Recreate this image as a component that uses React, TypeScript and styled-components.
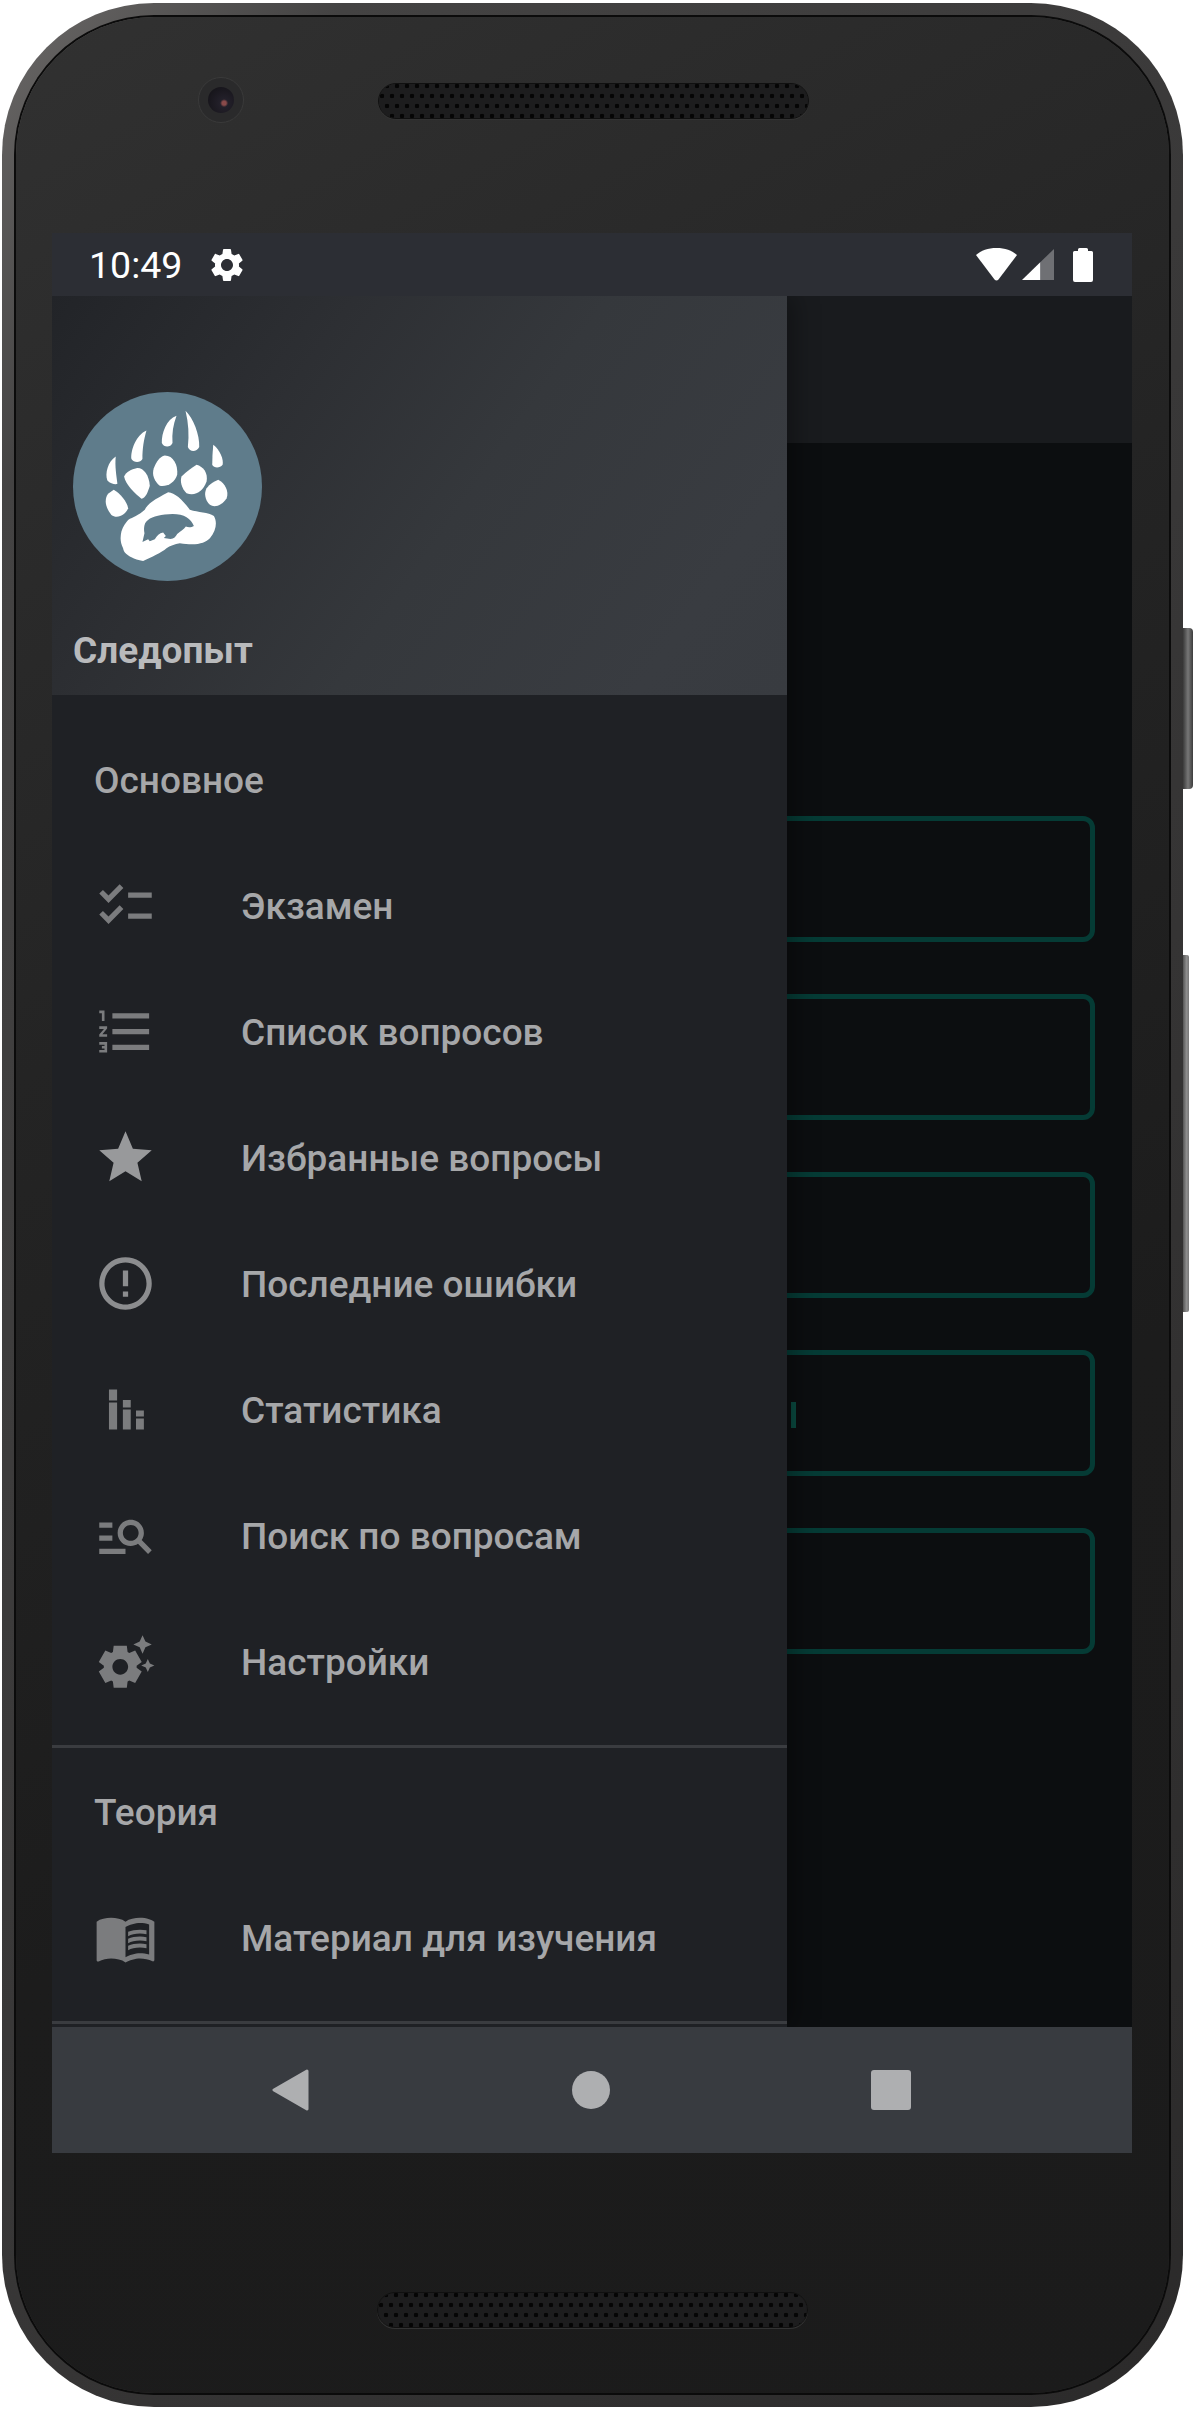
import styled, { createGlobalStyle } from "styled-components";
import type { ReactNode } from "react";
import {
  MdChecklist,
  MdErrorOutline,
  MdFormatListNumbered,
  MdManageSearch,
  MdMenuBook,
  MdSettings,
  MdSettingsSuggest,
  MdStar,
} from "react-icons/md";

const GlobalStyle = createGlobalStyle`
  html, body {
    margin: 0;
    padding: 0;
    background: #ffffff;
  }
  * {
    box-sizing: border-box;
  }
`;

const Page = styled.div`
  width: 1194px;
  height: 2409px;
  padding: 3px 0 0 2px;
  display: flex;
  overflow: hidden;
  font-family: Roboto, "Liberation Sans", sans-serif;
`;
const Frame = styled.div`
  width: 1181px;
  height: 2404px;
  padding: 14px;
  border-radius: 152px;
  background: linear-gradient(125deg, #6a6867 0%, #444343 12%, #363535 60%, #2b2a2a 100%);
  flex-shrink: 0;
`;
const Bezel = styled.div`
  height: 2376px;
  padding: 0 37px 0 36px;
  border-radius: 138px;
  background: linear-gradient(150deg, #313131 0%, #242424 35%, #1c1c1c 65%, #1b1b1b 100%);
  box-shadow: 0 0 0 2px #0b0b0b;
`;
const SideKeys = styled.div`
  display: flex;
  flex-direction: column;
  align-items: flex-start;
`;
const PowerKey = styled.div`
  width: 10px;
  height: 161px;
  margin-top: 625px;
  border-radius: 0 4px 4px 0;
  background: linear-gradient(90deg, #3a3a3a 0%, #777777 50%, #3c3c3c 100%);
`;
const VolumeKey = styled.div`
  width: 6px;
  height: 357px;
  margin-top: 166px;
  border-radius: 0 2px 2px 0;
  background: linear-gradient(90deg, #555555 0%, #8f8f8f 60%, #777777 100%);
`;

const TopBezel = styled.div`
  height: 216px;
  padding-top: 60px;
  display: flex;
  align-items: flex-start;
`;
const Camera = styled.div`
  width: 46px;
  height: 46px;
  margin-left: 146px;
  border-radius: 50%;
  border: 1px solid #3a3a3a;
  background: #2a2a2b;
  display: flex;
  align-items: center;
  justify-content: center;
`;
const Lens = styled.div`
  width: 26px;
  height: 26px;
  border-radius: 50%;
  background: radial-gradient(circle at 62% 62%, #8a4a4a 0 2px, #23202a 4px, #111014 100%);
`;
const Speaker = styled.div<{ $left: number; $top: number }>`
  width: 431px;
  height: 36px;
  margin-left: ${(props) => props.$left}px;
  margin-top: ${(props) => props.$top}px;
  border-radius: 18px;
  border: 1px solid #101010;
  background-color: #1d1d1e;
  background-image:
    radial-gradient(circle, #050505 2px, transparent 2.6px),
    radial-gradient(circle, #050505 2px, transparent 2.6px);
  background-size: 10px 20px;
  background-position: 8px 2px, 13px 12px;
  background-clip: padding-box;
  box-shadow: 0 1px 0 #333333;
`;
const BottomBezel = styled.div`
  height: 240px;
  padding-top: 139px;
  display: flex;
`;

const Screen = styled.div`
  width: 1080px;
  height: 1920px;
  display: flex;
  flex-direction: column;
  background: #0c0e10;
`;
const StatusBar = styled.div`
  height: 63px;
  padding: 0 39px 0 37px;
  display: flex;
  align-items: center;
  background: #2c2e34;
  color: #ffffff;
  flex-shrink: 0;
`;
const Clock = styled.span`
  font-size: 37.5px;
  margin-right: 25px;
`;
const StatusTools = styled.div`
  margin-left: auto;
  display: flex;
  align-items: center;
  gap: 5px;
`;
const Battery = styled.svg`
  margin-left: 14px;
`;
const Stage = styled.div`
  position: relative;
  flex: 1;
  overflow: hidden;
`;
const AppBar = styled.div`
  height: 147px;
  background: #191b1e;
`;
const Content = styled.div`
  padding: 373px 37px 0 42px;
  display: flex;
  flex-direction: column;
  gap: 52px;
`;
const AnswerBox = styled.div`
  height: 126px;
  padding-left: 692px;
  display: flex;
  align-items: center;
  border: 5px solid #053b35;
  border-radius: 12px;
`;
const LabelSliver = styled.div`
  width: 5px;
  height: 26px;
  margin-top: 4px;
  background: #0a4a40;
`;

const Drawer = styled.div`
  position: absolute;
  top: 0;
  left: 0;
  bottom: 0;
  width: 735px;
  background: #1f2125;
  box-shadow: 6px 0 24px rgba(0, 0, 0, 0.35);
`;
const DrawerHeader = styled.div`
  height: 399px;
  padding: 96px 21px 0;
  background: linear-gradient(125deg, #222428 0%, #2d2f33 30%, #35383c 55%, #393c41 85%, #383b40 100%);
`;
const Avatar = styled.svg`
  display: block;
`;
const Title = styled.div`
  margin-top: 48px;
  font-size: 37px;
  line-height: 43px;
  font-weight: 700;
  color: #b9babc;
`;
const MenuGroup = styled.div<{ $first?: boolean }>`
  padding: ${(props) => (props.$first ? "21px 0" : "0 0 21px")};
  border-bottom: 3px solid #3a3c40;
`;
const Subheader = styled.div`
  height: 126px;
  padding: 2px 0 0 42px;
  display: flex;
  align-items: center;
  font-size: 37px;
  font-weight: 500;
  color: #a6a7a9;
`;
const Row = styled.div`
  height: 126px;
  padding-left: 42px;
  display: flex;
  align-items: center;
  gap: 84px;
  font-size: 37px;
  font-weight: 500;
  color: #a6a7a9;
`;
const RowLabel = styled.span`
  padding-top: 2px;
`;
const IconBox = styled.div<{ $tone?: string }>`
  width: 63px;
  height: 63px;
  color: ${(props) => props.$tone ?? "#7b7c7e"};
  display: flex;
  flex-shrink: 0;
  svg {
    width: 63px;
    height: 63px;
    display: block;
  }
`;

const NavBar = styled.div`
  height: 126px;
  padding-right: 3px;
  display: flex;
  align-items: center;
  justify-content: center;
  background: #383b40;
  flex-shrink: 0;
`;
const NavSlot = styled.div`
  width: 300px;
  display: flex;
  justify-content: center;
`;
const HomeKey = styled.div`
  width: 38px;
  height: 38px;
  border-radius: 50%;
  background: #aeafb1;
`;
const RecentKey = styled.div`
  width: 40px;
  height: 40px;
  border-radius: 3px;
  background: #aeafb1;
`;

const StatsIcon = () => (
  <svg viewBox="0 0 24 24" fill="currentColor">
    <path d="M5.7 4.4h3.1v4.2H5.7zM5.7 9.3h3.1v10.3H5.7zM11 8.4h3v2.8h-3zM11 12h3v7.6h-3zM16 12.4h3v2.3h-3zM16 15.4h3v4.2h-3z" />
  </svg>
);

const PawLogo = () => (
  <Avatar width="189" height="189" viewBox="100 97 566 566">
    <circle cx="383" cy="380" r="283" fill="#5f7c8b" />
    <g fill="#ffffff">
      <path d="M228 290C205 305 195 340 203 362C212 372 228 375 233 372C230 345 225 320 228 290Z" />
      <path d="M320 212C290 225 272 270 275 298C282 310 302 310 308 298C308 265 312 240 320 212Z" />
      <path d="M410 168C380 178 365 220 366 250C372 264 392 264 398 250C396 220 400 195 410 168Z" />
      <path d="M437 153C460 175 480 225 478 262C470 278 450 278 444 262C448 225 446 190 437 153Z" />
      <path d="M520 255C540 270 552 300 548 315C540 326 522 326 517 315C517 295 518 275 520 255Z" />
      <path d="M290 325C310 322 328 345 330 378C325 395 318 415 305 417C285 400 258 375 253 350C260 335 275 328 290 325Z" />
      <path d="M375 287C400 287 415 315 412 345C405 370 380 382 360 378C345 365 335 345 342 325C350 305 360 290 375 287Z" />
      <path d="M470 315C490 320 505 340 500 365C490 395 465 410 440 400C425 385 420 365 425 350C440 335 455 325 470 315Z" />
      <path d="M535 360C555 370 568 395 560 415C548 435 525 445 510 435C495 420 492 400 500 385C510 372 522 365 535 360Z" />
      <path d="M222 390C240 400 262 425 265 445C258 465 232 478 215 465C198 445 192 420 205 402Z" />
      <path d="M315 450C322 432 345 418 385 397C405 400 425 415 450 450C475 458 505 458 522 468C532 485 530 510 510 535C495 550 470 558 420 550C405 552 390 558 380 565C365 578 335 592 310 603C295 600 285 598 275 592C262 585 252 578 250 565C240 545 242 530 245 515C250 498 258 488 265 480C280 472 295 468 315 450Z" />
    </g>
    <path
      fill="#5f7c8b"
      d="M316 490C325 475 345 468 375 464C400 460 425 462 440 472C450 478 458 488 462 498C455 503 445 503 438 500C432 508 422 514 412 522C408 530 402 536 392 537L372 534L378 528L370 518C358 520 352 528 345 538L330 544L325 538L308 546L314 520C312 510 312 500 316 490Z"
    />
  </Avatar>
);

type MenuItem = { icon: ReactNode; label: string; tone?: string };

const mainItems: MenuItem[] = [
  { icon: <MdChecklist />, label: "Экзамен" },
  { icon: <MdFormatListNumbered />, label: "Список вопросов" },
  { icon: <MdStar />, label: "Избранные вопросы", tone: "#98999b" },
  { icon: <MdErrorOutline />, label: "Последние ошибки", tone: "#8c8d8f" },
  { icon: <StatsIcon />, label: "Статистика" },
  { icon: <MdManageSearch />, label: "Поиск по вопросам" },
  { icon: <MdSettingsSuggest />, label: "Настройки" },
];

const MenuRow = ({ item }: { item: MenuItem }) => (
  <Row>
    <IconBox $tone={item.tone}>{item.icon}</IconBox>
    <RowLabel>{item.label}</RowLabel>
  </Row>
);

const App = () => {
  return (
    <Page>
      <GlobalStyle />
      <Frame>
        <Bezel>
          <TopBezel>
            <Camera>
              <Lens />
            </Camera>
            <Speaker $left={134} $top={6} />
          </TopBezel>
          <Screen>
            <StatusBar>
              <Clock>10:49</Clock>
              <MdSettings size={40} />
              <StatusTools>
                <svg width="41" height="33" viewBox="0 0 41 33" fill="#ffffff">
                  <path d="M20.5 0C12 0 5 2.5 0 7L18.5 31.5Q20.5 33.5 22.5 31.5L41 7C36 2.5 29 0 20.5 0Z" />
                </svg>
                <svg width="32" height="31" viewBox="0 0 32 31">
                  <path fill="#ffffff" d="M0 31L18.5 13V31Z" />
                  <path fill="#6f7074" d="M18.5 13L32 0V31H18.5Z" />
                </svg>
                <Battery width="20" height="34" viewBox="0 0 20 34" fill="#ffffff">
                  <path d="M5 3V1.5Q5 0 6.5 0H13.5Q15 0 15 1.5V3H18.5Q20 3 20 4.5V32Q20 34 18 34H2Q0 34 0 32V4.5Q0 3 1.5 3Z" />
                </Battery>
              </StatusTools>
            </StatusBar>
            <Stage>
              <AppBar />
              <Content>
                <AnswerBox />
                <AnswerBox />
                <AnswerBox />
                <AnswerBox>
                  <LabelSliver />
                </AnswerBox>
                <AnswerBox />
              </Content>
              <Drawer>
                <DrawerHeader>
                  <PawLogo />
                  <Title>Следопыт</Title>
                </DrawerHeader>
                <MenuGroup $first>
                  <Subheader>Основное</Subheader>
                  {mainItems.map((item) => (
                    <MenuRow key={item.label} item={item} />
                  ))}
                </MenuGroup>
                <MenuGroup>
                  <Subheader>Теория</Subheader>
                  <MenuRow item={{ icon: <MdMenuBook />, label: "Материал для изучения" }} />
                </MenuGroup>
              </Drawer>
            </Stage>
            <NavBar>
              <NavSlot>
                <svg width="37" height="42" viewBox="0 0 37 42" fill="#aeafb1" stroke="#aeafb1" strokeWidth="3" strokeLinejoin="round">
                  <path d="M35 2L2 21L35 40Z" />
                </svg>
              </NavSlot>
              <NavSlot>
                <HomeKey />
              </NavSlot>
              <NavSlot>
                <RecentKey />
              </NavSlot>
            </NavBar>
          </Screen>
          <BottomBezel>
            <Speaker $left={325} $top={0} />
          </BottomBezel>
        </Bezel>
      </Frame>
      <SideKeys>
        <PowerKey />
        <VolumeKey />
      </SideKeys>
    </Page>
  );
};

export default App;
